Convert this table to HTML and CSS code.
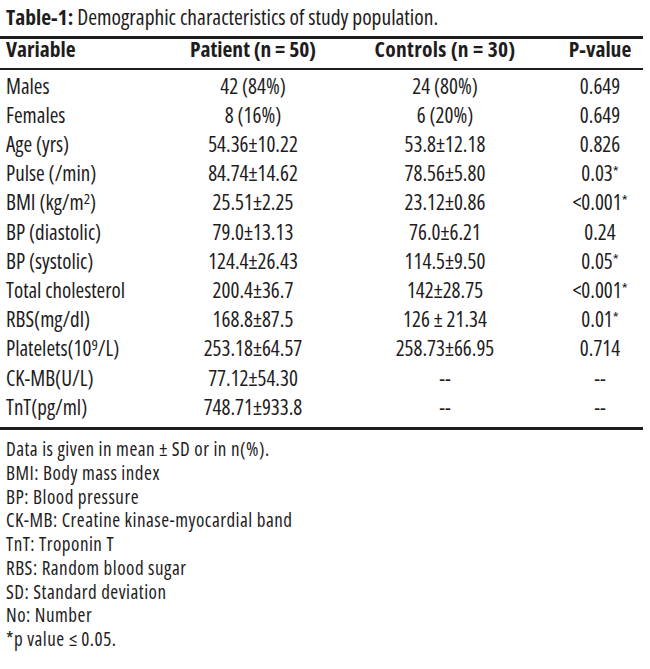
FILE: index.html
```html
<!DOCTYPE html>
<html>
<head>
<meta charset="utf-8">
<link rel="stylesheet" href="styles.css">
</head>
<body>
<div class="title"><b>Table-1:</b> Demographic characteristics of study population.</div>
<table class="data">
  <thead>
    <tr>
      <th class="c-var">Variable</th>
      <th class="c-pat">Patient (n = 50)</th>
      <th class="c-ctl">Controls (n = 30)</th>
      <th class="c-p">P-value</th>
    </tr>
  </thead>
  <tbody>
    <tr class="first"><td>Males</td><td>42 (84%)</td><td>24 (80%)</td><td class="pv">0.649</td></tr>
    <tr><td>Females</td><td>8 (16%)</td><td>6 (20%)</td><td class="pv">0.649</td></tr>
    <tr><td>Age (yrs)</td><td>54.36±10.22</td><td>53.8±12.18</td><td class="pv">0.826</td></tr>
    <tr><td>Pulse (/min)</td><td>84.74±14.62</td><td>78.56±5.80</td><td class="pv">0.03<span class="ast">*</span></td></tr>
    <tr><td>BMI (kg/m<sup class="sup">2</sup>)</td><td>25.51±2.25</td><td>23.12±0.86</td><td class="pv">&lt;0.001<span class="ast">*</span></td></tr>
    <tr><td>BP (diastolic)</td><td>79.0±13.13</td><td>76.0±6.21</td><td class="pv">0.24</td></tr>
    <tr><td>BP (systolic)</td><td>124.4±26.43</td><td>114.5±9.50</td><td class="pv">0.05<span class="ast">*</span></td></tr>
    <tr><td>Total cholesterol</td><td>200.4±36.7</td><td>142±28.75</td><td class="pv">&lt;0.001<span class="ast">*</span></td></tr>
    <tr><td>RBS(mg/dl)</td><td>168.8±87.5</td><td>126 ± 21.34</td><td class="pv">0.01<span class="ast">*</span></td></tr>
    <tr><td>Platelets(10<sup class="sup">9</sup>/L)</td><td>253.18±64.57</td><td>258.73±66.95</td><td class="pv">0.714</td></tr>
    <tr><td>CK-MB(U/L)</td><td>77.12±54.30</td><td>--</td><td class="pv">--</td></tr>
    <tr class="last"><td>TnT(pg/ml)</td><td>748.71±933.8</td><td>--</td><td class="pv">--</td></tr>
  </tbody>
</table>
<div class="notes">
  <p>Data is given in mean ± SD or in n(%).</p>
  <p>BMI: Body mass index</p>
  <p>BP: Blood pressure</p>
  <p>CK-MB: Creatine kinase-myocardial band</p>
  <p>TnT: Troponin T</p>
  <p>RBS: Random blood sugar</p>
  <p>SD: Standard deviation</p>
  <p>No: Number</p>
  <p>*p value ≤ 0.05.</p>
</div>
</body>
</html>
```

FILE: styles.css
```css
html, body {
  margin: 0;
  padding: 0;
  background: #ffffff;
}
body {
  color: #1e1c1d;
  font-family: "Open Sans", "DejaVu Sans", sans-serif;
  font-stretch: 75%;
}
.title {
  padding: 5px 0 0 6px;
  font-size: 21.5px;
  line-height: 24px;
  height: 24px;
  margin-bottom: 7px;
  white-space: nowrap;
}
.title b {
  font-weight: 700;
}
.data {
  width: 643px;
  border-collapse: collapse;
  border-top: 3px solid #1e1c1d;
  border-bottom: 3px solid #1e1c1d;
  font-size: 21px;
}
.data th {
  font-size: 21.5px;
  font-weight: 700;
  line-height: 20px;
  padding: 0 0 9px 0;
  border-bottom: 2px solid #1e1c1d;
  text-align: center;
  white-space: nowrap;
}
.data th.c-var {
  text-align: left;
  padding-left: 6px;
  width: 159px;
}
.data th.c-pat { width: 176px; }
.data th.c-ctl { width: 208px; letter-spacing: 0.3px; }
.data th.c-p { width: 86px; padding-left: 8px; }
.data td {
  line-height: 29.2px;
  padding: 0;
  text-align: center;
  white-space: nowrap;
}
.data td:first-child {
  text-align: left;
  padding-left: 6px;
}
.data td.pv { padding-left: 8px; }
.data tr.first td { padding-top: 1.5px; }
.data tr.last td { padding-bottom: 5.3px; }
.sup {
  font-size: 15px;
  line-height: 0;
  vertical-align: 6px;
}
.ast {
  font-size: 15px;
  vertical-align: 4px;
  line-height: 0;
}
.notes {
  margin-top: 8px;
  padding-left: 6px;
  font-size: 19px;
  letter-spacing: 0.5px;
}
.notes p {
  margin: 0;
  line-height: 23.75px;
  white-space: nowrap;
}
```
